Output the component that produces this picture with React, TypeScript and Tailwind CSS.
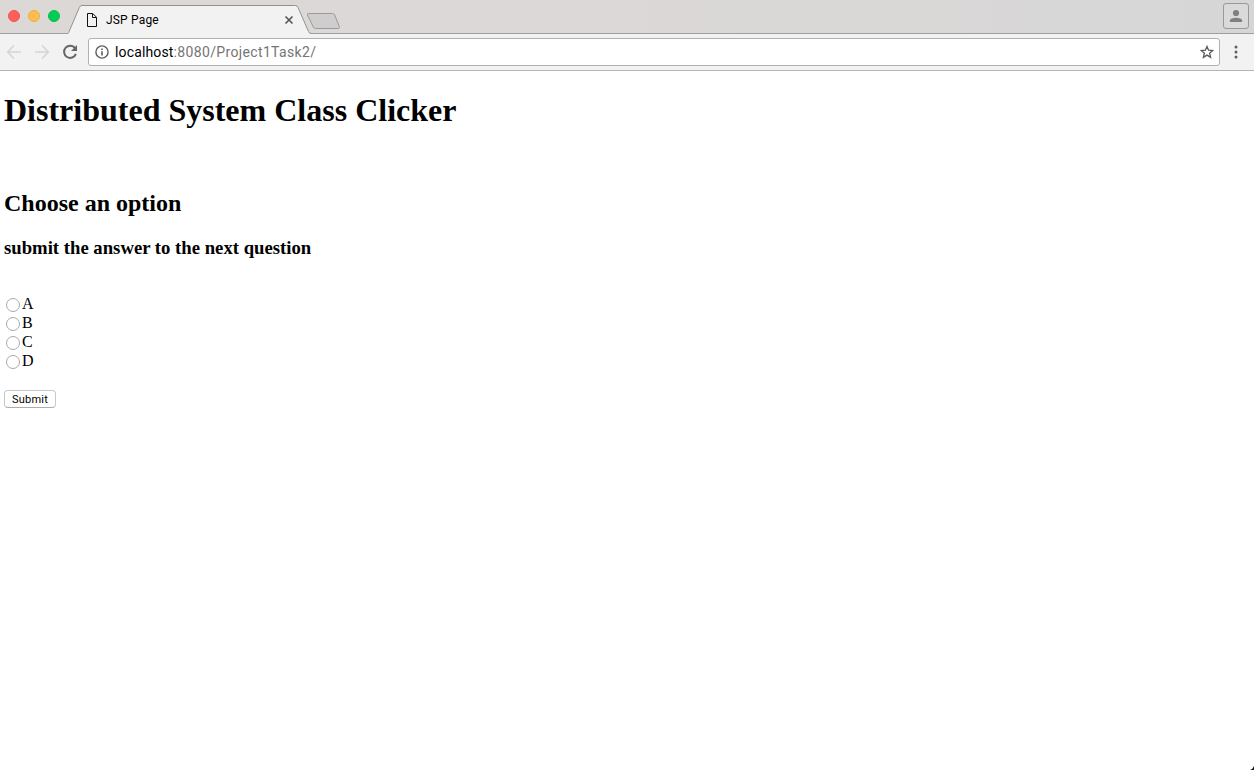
const options = ["A", "B", "C", "D"];

function TabStrip() {
  return (
    <div className="flex h-[34px] bg-linear-to-r from-[#dcd8d6] via-[#dbd8d7] to-[#d6d6d6] shadow-[inset_0_-1px_0_#a19d9c]">
      <div className="flex w-[68px] gap-2 pt-[10px] pl-2">
        <span className="size-3 rounded-full border border-[#ef5350] bg-[#ff5f5c]" />
        <span className="size-3 rounded-full border border-[#efad45] bg-[#ffbd4f]" />
        <span className="size-3 rounded-full border border-[#0dbb4c] bg-[#00cd55]" />
      </div>
      <div className="relative flex h-[34px] w-[243px]">
        <svg className="absolute inset-0" width="243" height="34" viewBox="0 0 243 34">
          <path d="M0 34V33.5Q.5 33 1.100 31.500L11.300 7.500Q12.100 5.500 14 5.500H227.500Q229.200 5.500 230 7.500L240.500 31.500Q241.300 33.500 243 33.500V34Z" fill="#f2f2f2" />
          <path d="M0 33.5Q.5 33 1.100 31.500L11.300 7.500Q12.100 5.500 14 5.500H227.500Q229.200 5.500 230 7.500L240.500 31.500Q241.300 33.500 243 33.500" fill="none" stroke="#949190" />
        </svg>
        <div className="relative flex w-full items-center pt-[6px] pl-[18px]">
          <svg width="12" height="14" viewBox="0 0 12 14" fill="none" stroke="#111" strokeWidth="1">
            <path d="M1.500 .5H6.800L10.500 4.300V13.500H1.500Z" />
            <path d="M6.500 1V4.500H10.400" />
          </svg>
          <span className="ml-2 text-[12px] leading-[14px] tracking-[0.180px] text-black">JSP Page</span>
          <svg className="mr-[17px] ml-auto" width="10" height="10" viewBox="0 0 10 10" stroke="#545454" strokeWidth="1.600">
            <path d="M1.500 1.500L8.500 8.500M8.500 1.500L1.500 8.500" />
          </svg>
        </div>
      </div>
      <svg className="-ml-[5px]" width="36" height="34" viewBox="0 0 36 34">
        <path d="M2.500 13.500H26.500Q28 13.500 28.700 15L33.300 26.500Q34 28.500 32.500 28.500H9.500Q8 28.500 7.300 27L1.500 15Q.8 13.500 2.500 13.500Z" fill="#cfcdcd" stroke="#9b9999" />
      </svg>
      <div className="mt-[3px] mr-[5px] ml-auto flex h-[26px] w-[26px] items-center justify-center rounded-[3px] border border-[#999] bg-[#dadada]">
        <svg width="14" height="14" viewBox="0 0 14 14" fill="#808080">
          <circle cx="7" cy="4" r="3.100" />
          <path d="M.9 13V11.500C.9 9.600 4.500 8.700 7 8.700S13.100 9.600 13.100 11.500V13Z" />
        </svg>
      </div>
    </div>
  );
}

function Toolbar() {
  return (
    <div className="flex h-[37px] border-b border-[#b5b5b5] bg-[#f2f2f2] pt-1">
      <svg width="88" height="28" viewBox="0 0 88 28" fill="none" strokeWidth="1.500">
        <path d="M21 14H8M14 7.500L7.500 14L14 20.500" stroke="#d5d5d5" />
        <path d="M35 14H48M42 7.500L48.500 14L42 20.500" stroke="#d5d5d5" />
        <path d="M75.100 10.200A6.100 6.100 0 1 0 75.900 15.900" stroke="#656565" strokeWidth="2" />
        <path d="M77 7V13H71Z" fill="#656565" />
      </svg>
      <div className="flex h-[28px] w-[1132px] items-center rounded-[3px] border border-[#b0b0b0] bg-white pr-[5px] pl-[6px]">
        <svg width="14" height="14" viewBox="0 0 14 14">
          <circle cx="7" cy="7" r="6.100" fill="none" stroke="#5f5f5f" strokeWidth="1.400" />
          <path d="M6.200 3.500H7.800V5H6.200ZM6.200 6.200H7.800V10.600H6.200Z" fill="#5f5f5f" />
        </svg>
        <span className="ml-[6px] text-[14px] leading-[18px] tracking-[0.350px] text-[#757575]">
          <span className="tracking-[0.150px] text-black">localhost</span>:8080/Project1Task2/
        </span>
        <svg className="ml-auto" width="14" height="14" viewBox="0 0 14 14" fill="none" stroke="#5a5a5a" strokeWidth="1.300">
          <path d="M7 1.400L8.600 5.200L12.800 5.500L9.600 8.200L10.600 12.300L7 10.100L3.400 12.300L4.400 8.200L1.200 5.500L5.400 5.200Z" />
        </svg>
      </div>
      <svg className="ml-[14px]" width="4" height="28" viewBox="0 0 4 28" fill="#5f5f5f">
        <circle cx="2" cy="9" r="1.500" />
        <circle cx="2" cy="14" r="1.500" />
        <circle cx="2" cy="19" r="1.500" />
      </svg>
    </div>
  );
}

export default function App() {
  return (
    <div className="relative flex h-[770px] w-[1254px] flex-col overflow-hidden bg-white font-['Roboto',sans-serif]">
      <TabStrip />
      <Toolbar />
      <main className="px-1 font-['Liberation_Serif',serif] text-black">
        <h1 className="mt-[21px] text-[32px] leading-[37px] font-bold">Distributed System Class Clicker</h1>
        <h2 className="mt-[60px] text-[24px] leading-[28px] font-bold">Choose an option</h2>
        <h3 className="mt-5 text-[18.720px] leading-[21px] font-bold">submit the answer to the next question</h3>
        <form className="mt-[36px]">
          {options.map((option) => (
            <label key={option} className="flex h-[19px] items-center text-[16px] leading-[18px]">
              <input
                type="radio"
                name="answer"
                value={option}
                className="mt-[2px] mr-[2px] ml-[2px] size-[14px] appearance-none rounded-full border border-[#a9a9a9] bg-white checked:border-4 checked:border-[#3b88fd]"
              />
              <span>{option}</span>
            </label>
          ))}
          <button
            type="button"
            className="mt-[20px] flex h-[18px] w-[52px] items-center justify-center rounded-[4px] border border-[#c8c8c8] border-b-[#adadad] bg-white font-['Roboto',sans-serif] text-[11px] leading-[13px] tracking-[0.250px]"
          >
            Submit
          </button>
        </form>
      </main>
      <svg className="absolute right-0 bottom-0" width="4" height="4" viewBox="0 0 4 4">
        <path d="M4 0V4H0Q3 3 4 0Z" fill="#111" />
      </svg>
    </div>
  );
}
